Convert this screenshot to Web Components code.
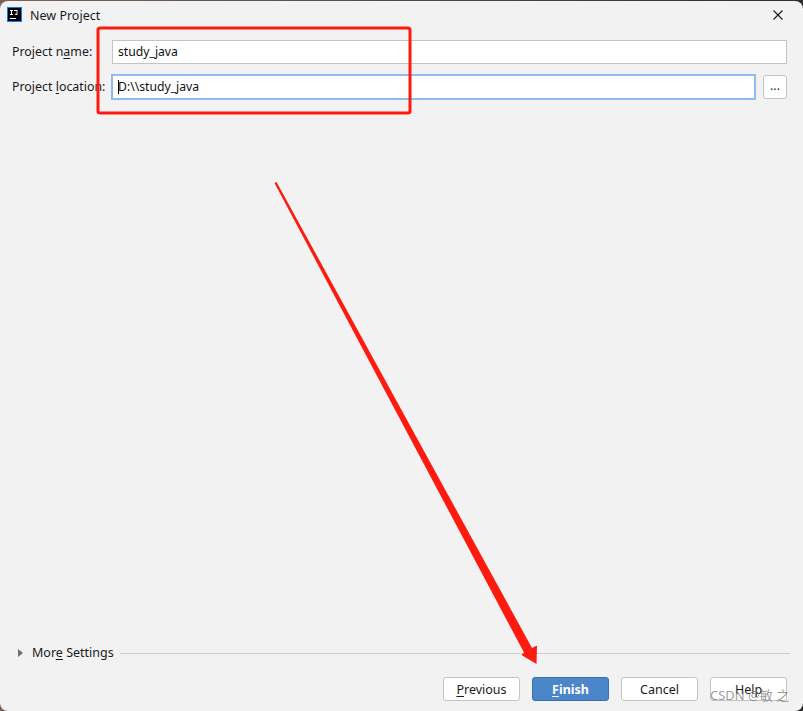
<!DOCTYPE html>
<html>
<head>
<meta charset="utf-8">
<title>New Project</title>
<style>
  html, body { margin: 0; height: 100%; }
  html { background: linear-gradient(90deg, #7a6555, #2e2e2e); }
  body { font-family: "Noto Sans", "Noto Sans CJK SC", sans-serif; }
</style>
</head>
<body>
<project-dialog>
  <form-row label="Project n" key="a" rest="me:" value="study_java"></form-row>
  <form-row label="Project " key="l" rest="ocation:" value="D:\\study_java" focused></form-row>
</project-dialog>

<script>
const dialogTemplate = document.createElement('template')
dialogTemplate.innerHTML = `
<style>
  :host {
    display: flex;
    flex-direction: column;
    box-sizing: border-box;
    position: relative;
    width: 803px;
    height: 710px;
    margin-top: 1px;
    background: #f2f2f2;
    border-radius: 8px;
    color: #1a1a1a;
    font-size: 13px;
    overflow: hidden;
  }
  .title {
    display: flex;
    align-items: center;
    height: 27px;
    padding: 0 20px 0 7px;
    gap: 8px;
    font-size: 12.5px;
    flex: none;
  }
  .title span { flex: 1; padding-top: 2px; }
  .form {
    display: flex;
    flex-direction: column;
    gap: 11px;
    padding: 12px 16px 0 12px;
    flex: none;
  }
  .spacer { flex: 1; }
  project-footer { flex: none; }
</style>
<div class="title">
  <idea-logo></idea-logo>
  <span>New Project</span>
  <close-icon></close-icon>
</div>
<div class="form"><slot></slot></div>
<div class="spacer"></div>
<more-settings></more-settings>
<project-footer></project-footer>
<red-marks></red-marks>
<watermark-text></watermark-text>
`
customElements.define('project-dialog', class extends HTMLElement {
  constructor () {
    super()
    this.attachShadow({ mode: 'open' })
      .appendChild(dialogTemplate.content.cloneNode(true))
  }
})

customElements.define('idea-logo', class extends HTMLElement {
  constructor () {
    super()
    this.attachShadow({ mode: 'open' }).innerHTML = `
<style>
  :host { display: block; width: 15px; height: 15px; flex: none; }
  svg { display: block; }
</style>
<svg width="15" height="15" viewBox="0 0 15 15">
  <rect width="15" height="15" fill="#087cfa"/>
  <rect x="1" y="1" width="13" height="13" fill="#000"/>
  <path d="M3 3h3v1H5v3h1v1H3V7h1V4H3z" fill="#fff"/>
  <path d="M7 3h3.500v3.800c0 .8-.5 1.200-1.300 1.200-.7 0-1.200-.3-1.500-.8l.6-.6c.2.300.5.500.8.500.3 0 .5-.2.500-.5V4H7z" fill="#fff"/>
  <rect x="3" y="11" width="6" height="1" fill="#fff"/>
</svg>`
  }
})

customElements.define('close-icon', class extends HTMLElement {
  constructor () {
    super()
    this.attachShadow({ mode: 'open' }).innerHTML = `
<style>
  :host { display: block; width: 10px; height: 10px; flex: none; }
  svg { display: block; }
</style>
<svg width="10" height="10" viewBox="0 0 10 10">
  <path d="M.5.5l9 9M9.500.5l-9 9" stroke="#1a1a1a" stroke-width="1.100" fill="none"/>
</svg>`
  }
})

const rowTemplate = document.createElement('template')
rowTemplate.innerHTML = `
<style>
  :host { display: flex; align-items: center; height: 24px; font-size: 12.2px; }
  .label { width: 100px; flex: none; white-space: nowrap; padding-bottom: 1px; font-size: 12.4px; }
  u { text-underline-offset: 2px; text-decoration-thickness: 1px; }
  .field {
    flex: 1;
    box-sizing: border-box;
    height: 24px;
    background: #fff;
    border: 1px solid #c4c4c4;
    padding: 0 5px;
    line-height: 22px;
    white-space: nowrap;
    position: relative;
    color: #111;
  }
  :host([focused]) .field {
    border: 1px solid #90bcec;
    box-shadow: 0 0 0 1px #90bcec;
  }
  :host([focused]) .field::before {
    content: '';
    position: absolute;
    left: 5px;
    top: 4px;
    width: 1px;
    height: 14px;
    background: #000;
  }
  .more {
    display: none;
    flex: none;
    box-sizing: border-box;
    width: 24px;
    height: 24px;
    margin-left: 8px;
    border: 1px solid #c4c4c4;
    border-radius: 3px;
    background: #fff;
    text-align: center;
    line-height: 20px;
  }
  :host([focused]) .more { display: block; }
</style>
<div class="label"><span id="before"></span><u id="key"></u><span id="after"></span></div>
<div class="field" id="field"></div>
<div class="more">...</div>
`
customElements.define('form-row', class extends HTMLElement {
  constructor () {
    super()
    this.attachShadow({ mode: 'open' })
      .appendChild(rowTemplate.content.cloneNode(true))
  }

  connectedCallback () {
    const root = this.shadowRoot
    root.querySelector('#before').textContent = this.getAttribute('label')
    root.querySelector('#key').textContent = this.getAttribute('key')
    root.querySelector('#after').textContent = this.getAttribute('rest')
    root.querySelector('#field').textContent = this.getAttribute('value')
  }
})

customElements.define('more-settings', class extends HTMLElement {
  constructor () {
    super()
    this.attachShadow({ mode: 'open' }).innerHTML = `
<style>
  :host {
    display: flex;
    align-items: center;
    height: 20px;
    padding: 0 13px 0 18px;
    font-size: 12.5px;
  }
  .arrow {
    width: 0;
    height: 0;
    border-left: 5px solid #6e6e6e;
    border-top: 4.5px solid transparent;
    border-bottom: 4.5px solid transparent;
    margin-right: 9px;
  }
  span { padding-bottom: 1px; }
  u { text-underline-offset: 2px; text-decoration-thickness: 1px; }
  .line { flex: 1; height: 1px; background: #cdcdcd; margin-left: 6px; }
</style>
<div class="arrow"></div>
<span>Mor<u>e</u> Settings</span>
<div class="line"></div>`
  }
})

const buttonTemplate = document.createElement('template')
buttonTemplate.innerHTML = `
<style>
  :host {
    display: block;
    box-sizing: border-box;
    width: 77px;
    height: 24px;
    background: #fff;
    border: 1px solid #c4c4c4;
    border-radius: 3px;
    text-align: center;
    line-height: 24px;
    font-size: 12.5px;
  }
  :host([primary]) {
    background: #4a86c8;
    border-color: #3a70b0;
    color: #fff;
    font-weight: 700;
  }
</style>
<slot></slot>
`
customElements.define('dialog-button', class extends HTMLElement {
  constructor () {
    super()
    this.attachShadow({ mode: 'open' })
      .appendChild(buttonTemplate.content.cloneNode(true))
  }
})

customElements.define('project-footer', class extends HTMLElement {
  constructor () {
    super()
    this.attachShadow({ mode: 'open' }).innerHTML = `
<style>
  :host {
    display: flex;
    justify-content: flex-end;
    gap: 12px;
    padding: 14px 16px 10px 0;
  }
  u { text-underline-offset: 2px; text-decoration-thickness: 1px; }
</style>
<dialog-button><u>P</u>revious</dialog-button>
<dialog-button primary><u>F</u>inish</dialog-button>
<dialog-button>Cancel</dialog-button>
<dialog-button>Help</dialog-button>`
  }
})

// screenshot annotation painted over the dialog
customElements.define('red-marks', class extends HTMLElement {
  constructor () {
    super()
    this.attachShadow({ mode: 'open' }).innerHTML = `
<style>
  :host { position: absolute; left: 0; top: -1px; width: 803px; height: 711px; pointer-events: none; }
  svg { display: block; }
</style>
<svg width="803" height="711" viewBox="0 0 803 711">
  <rect x="98" y="28" width="312" height="85" rx="2" fill="none" stroke="#ff1a10" stroke-width="3"/>
  <path d="M274.500 183L276.500 182L532 648L537 645.500L536.500 664L521.500 655L524 652.500Z" fill="#ff1a10"/>
</svg>`
  }
})

customElements.define('watermark-text', class extends HTMLElement {
  constructor () {
    super()
    this.attachShadow({ mode: 'open' }).innerHTML = `
<style>
  :host {
    position: absolute;
    left: 710px;
    top: 686px;
    font-size: 13px;
    line-height: 16px;
    color: rgba(120, 120, 120, 0.75);
    white-space: nowrap;
  }
</style>
<span>CSDN @敏 之</span>`
  }
})
</script>
</body>
</html>
